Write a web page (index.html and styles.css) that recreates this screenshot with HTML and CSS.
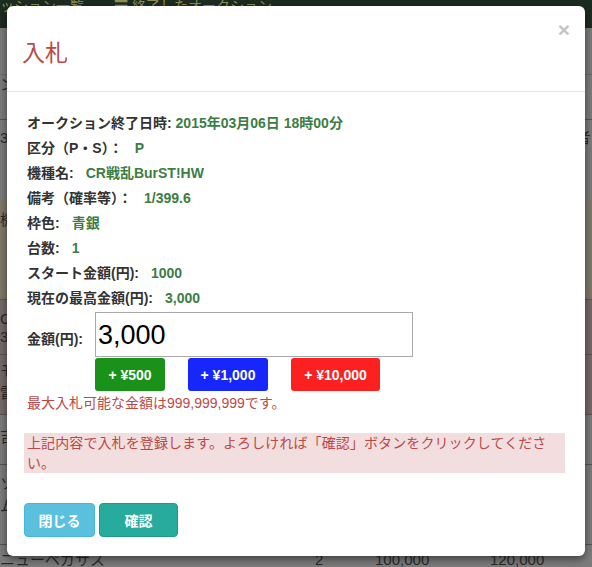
FILE: index.html
```html
<!DOCTYPE html>
<html lang="ja">
<head>
<meta charset="utf-8">
<link rel="stylesheet" href="styles.css">
</head>
<body>
<div class="page">
  <div class="topbar"><span class="nav">ッション一覧</span><span class="nav nav2">☰ 終了したオークション</span></div>
  <div class="bg-rows">
    <div class="bg-row r1"></div>
    <div class="bg-row r2"><span>ン</span></div>
    <div class="bg-row r3"><span>3</span><span class="rt">ﾞ者</span></div>
    <div class="bg-row r4"><span>機</span></div>
    <div class="bg-row r6"><span>C<br>3</span></div>
    <div class="bg-row r7"><span>モ<br>雷</span></div>
    <div class="bg-row r8"><span>吉</span></div>
    <div class="bg-row r9"><span>ソ<br>ム</span></div>
    <div class="bg-row r10"><span class="c1">ニューペガサス</span><span class="c2">2</span><span class="c3">100,000</span><span class="c4">120,000</span></div>
  </div>
</div>

<div class="modal">
  <div class="modal-header">
    <h3 class="modal-title">入札</h3>
    <span class="close">×</span>
  </div>
  <div class="modal-body">
    <div class="info"><span class="lbl">オークション終了日時:</span> <span class="val">2015年03月06日 18時00分</span></div>
    <div class="info"><span class="lbl">区分（P・S）：</span><span class="val gap">P</span></div>
    <div class="info"><span class="lbl">機種名:</span><span class="val gap">CR戦乱BurST!HW</span></div>
    <div class="info"><span class="lbl">備考（確率等）：</span><span class="val gap">1/399.6</span></div>
    <div class="info"><span class="lbl">枠色:</span><span class="val gap">青銀</span></div>
    <div class="info"><span class="lbl">台数:</span><span class="val gap">1</span></div>
    <div class="info"><span class="lbl">スタート金額(円):</span><span class="val gap">1000</span></div>
    <div class="info"><span class="lbl">現在の最高金額(円):</span><span class="val gap">3,000</span></div>

    <div class="amount-row">
      <span class="lbl amount-lbl">金額(円):</span>
      <div class="amount-col">
        <input class="amount-input" type="text" value="3,000">
        <div class="add-btns">
          <span class="add green">+ ¥500</span>
          <span class="add blue">+ ¥1,000</span>
          <span class="add red">+ ¥10,000</span>
        </div>
      </div>
    </div>
    <p class="max-msg">最大入札可能な金額は999,999,999です。</p>

    <div class="alert">上記内容で入札を登録します。よろしければ「確認」ボタンをクリックしてください。</div>

    <div class="footer-btns">
      <span class="btn info-btn">閉じる</span>
      <span class="btn ok-btn">確認</span>
    </div>
  </div>
</div>
</body>
</html>
```

FILE: styles.css
```css
* { box-sizing: border-box; }
html, body { margin: 0; padding: 0; }
body {
  width: 592px;
  height: 567px;
  overflow: hidden;
  font-family: "Liberation Sans", "Noto Sans CJK JP", sans-serif;
  background: #7c7c7c;
  position: relative;
}
.page { position: relative; width: 592px; height: 567px; }
.topbar {
  height: 28px;
  background: #1d2c20;
  color: #8d8f55;
  font-size: 14px;
  line-height: 12px;
  padding-top: 0;
  white-space: nowrap;
  overflow: hidden;
}
.nav2 { margin-left: 30px; }
.bg-rows { color: #2a2a2a; font-size: 15px; }
.bg-row { position: relative; border-bottom: 1px solid #555; }
.bg-row span { position: absolute; left: 0; top: 0; line-height: 20px; }
.bg-row .rt { left: 568px; }
.r1 { height: 47px; border-bottom: 1px solid #6a6a6a; }
.r2 { height: 45px; }
.r3 { height: 80px; border: none; }
.r3 span { top: 8px; }
.r4 { height: 100px; background: #7e7a6a; }
.r4 span { top: 10px; }
.r6 { height: 55px; background: #76696a; }
.r6 span { top: 10px; line-height: 18px; }
.r7 { height: 60px; background: #76696a; }
.r7 span { top: 5px; line-height: 22px; }
.r8 { height: 50px; }
.r8 span { top: 12px; }
.r9 { height: 80px; }
.r9 span { top: 8px; line-height: 22px; }
.r10 { height: 30px; border: none; }
.r10 span { top: 5px; }
.r10 .c2 { left: 315px; }
.r10 .c3 { left: 375px; }
.r10 .c4 { left: 490px; }

.modal {
  position: absolute;
  left: 7px;
  top: 6px;
  width: 578px;
  height: 550px;
  background: #fff;
  border-radius: 6px;
  box-shadow: 0 3px 9px rgba(0,0,0,0.5);
}
.modal-header {
  position: relative;
  height: 86px;
  border-bottom: 1px solid #e5e5e5;
  padding: 32px 20px 0 15px;
}
.modal-title {
  margin: 0;
  font-size: 23px;
  font-weight: normal;
  color: #b94a48;
  line-height: 30px;
}
.close {
  position: absolute;
  right: 15px;
  top: 14px;
  font-size: 21px;
  font-weight: bold;
  color: #c4c4c4;
  line-height: 20px;
}
.modal-body { padding: 19px 20px 0 20px; }
.info {
  font-size: 14px;
  line-height: 25px;
  font-weight: bold;
  white-space: nowrap;
}
.lbl { color: #333; font-weight: bold; font-size: 14px; }
.val { color: #3c7d44; }
.val.gap { margin-left: 12px; }

.amount-row {
  display: flex;
  align-items: flex-start;
  margin-top: 1px;
}
.amount-lbl { width: 68px; margin-top: 17px; line-height: 20px; }
.amount-col { display: flex; flex-direction: column; }
.amount-input {
  width: 318px;
  height: 45px;
  border: 1px solid #aaa;
  font-family: "Liberation Sans", sans-serif;
  font-size: 27px;
  padding: 2px 1px 0 2px;
  color: #000;
  outline: none;
}
.add-btns { display: flex; gap: 23px; margin-top: 1px; }
.add {
  display: inline-flex;
  align-items: center;
  justify-content: center;
  height: 33px;
  color: #fff;
  font-weight: bold;
  font-size: 14px;
  border-radius: 3px;
}
.green { width: 70px; background: #1a921a; }
.blue { width: 80px; background: #1726fa; }
.red { width: 89px; background: #fc2020; }
.max-msg {
  margin: 0;
  padding-top: 2px;
  color: #b94a48;
  font-size: 14px;
  line-height: 20px;
}
.alert {
  margin: 20px 0 0 -3px;
  width: 541px;
  background: #f2dede;
  color: #b94a48;
  font-size: 14px;
  line-height: 20px;
  padding: 0 8px 0 3px;
  letter-spacing: 0.1px;
}
.footer-btns { display: flex; gap: 4px; margin: 30px 0 0 -3px; }
.btn {
  display: inline-flex;
  align-items: center;
  justify-content: center;
  height: 34px;
  color: #fff;
  font-weight: bold;
  font-size: 14px;
  border-radius: 4px;
}
.info-btn { width: 71px; background: #5bc0de; border: 1px solid #46b8da; }
.ok-btn { width: 79px; background: #26ab9c; border: 1px solid #1e9a8c; }
```
